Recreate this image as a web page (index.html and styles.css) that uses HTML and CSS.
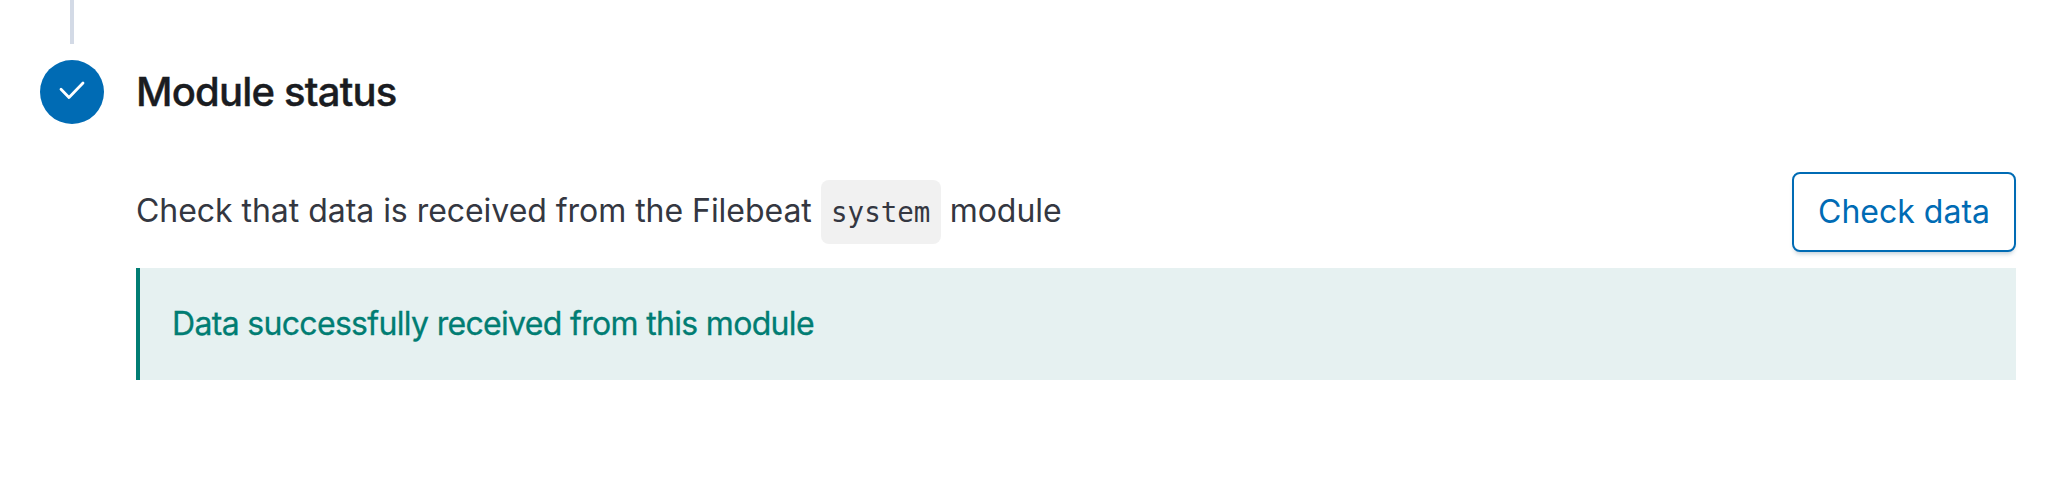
FILE: index.html
```
<!DOCTYPE html>
<html lang="en">
<head>
<meta charset="utf-8">
<title>Module status</title>
<link rel="stylesheet" href="styles.css">
</head>
<body>
<main class="step">
  <div class="step-rail">
    <div class="step-line"></div>
    <svg class="step-icon" viewBox="0 0 64 64" role="img" aria-label="Step complete">
      <circle cx="32" cy="32" r="32"/>
      <path d="M21 29.2 29 37.4 43 23"/>
    </svg>
  </div>
  <section class="step-body">
    <h2 class="step-title">Module status</h2>
    <div class="status-row">
      <p class="status-text">Check that data is received from the Filebeat <code class="code">system</code> module</p>
      <button class="button" type="button">Check data</button>
    </div>
    <div class="callout"><span class="callout-title">Data successfully received from this module</span></div>
  </section>
</main>
</body>
</html>
```
FILE: styles.css
```
* { box-sizing: border-box; }
body {
  margin: 0;
  background: #fff;
  color: #343741;
  font: 400 32px/48px Inter, "Liberation Sans", sans-serif;
}
.step {
  display: flex;
  gap: 32px;
  height: 492px;
  padding: 0 52px 0 40px;
}
.step-rail {
  display: flex;
  flex-direction: column;
  align-items: center;
  gap: 16px;
  width: 64px;
}
.step-line { width: 4px; height: 44px; background: #d3dae6; }
.step-icon { width: 64px; height: 64px; }
.step-icon circle { fill: #006bb4; }
.step-icon path {
  fill: none;
  stroke: #fff;
  stroke-width: 2.8;
  stroke-linecap: round;
  stroke-linejoin: round;
}
.step-body { flex: 1; padding-top: 60px; }
.step-title {
  margin: 0 0 48px;
  color: #1a1c21;
  font-size: 40px;
  font-weight: 500;
  line-height: 64px;
  letter-spacing: -0.8px;
  -webkit-text-stroke: 0.4px;
}
.status-row {
  display: flex;
  align-items: center;
  justify-content: space-between;
  height: 80px;
}
.status-text { margin: 0; letter-spacing: -0.04px; white-space: nowrap; }
.code {
  display: inline-block;
  width: 120px;
  height: 64px;
  border-radius: 8px;
  background: #f1f1f1;
  font: 400 27.5px/64px "DejaVu Sans Mono", monospace;
  letter-spacing: 0;
  text-align: center;
}
.button {
  width: 224px;
  height: 80px;
  padding: 0;
  border: 2px solid #006bb4;
  border-radius: 8px;
  background: #fff;
  box-shadow: 0 4px 4px -2px rgba(54, 97, 126, 0.3);
  color: #006bb4;
  font: inherit;
}
.callout {
  height: 112px;
  margin-top: 16px;
  padding: 32px;
  padding-left: 32px;
  border-left: 4px solid #017d73;
  background: #e6f1f1;
  color: #017d73;
}
.callout-title { letter-spacing: -0.68px; -webkit-text-stroke: 0.3px; }
```
